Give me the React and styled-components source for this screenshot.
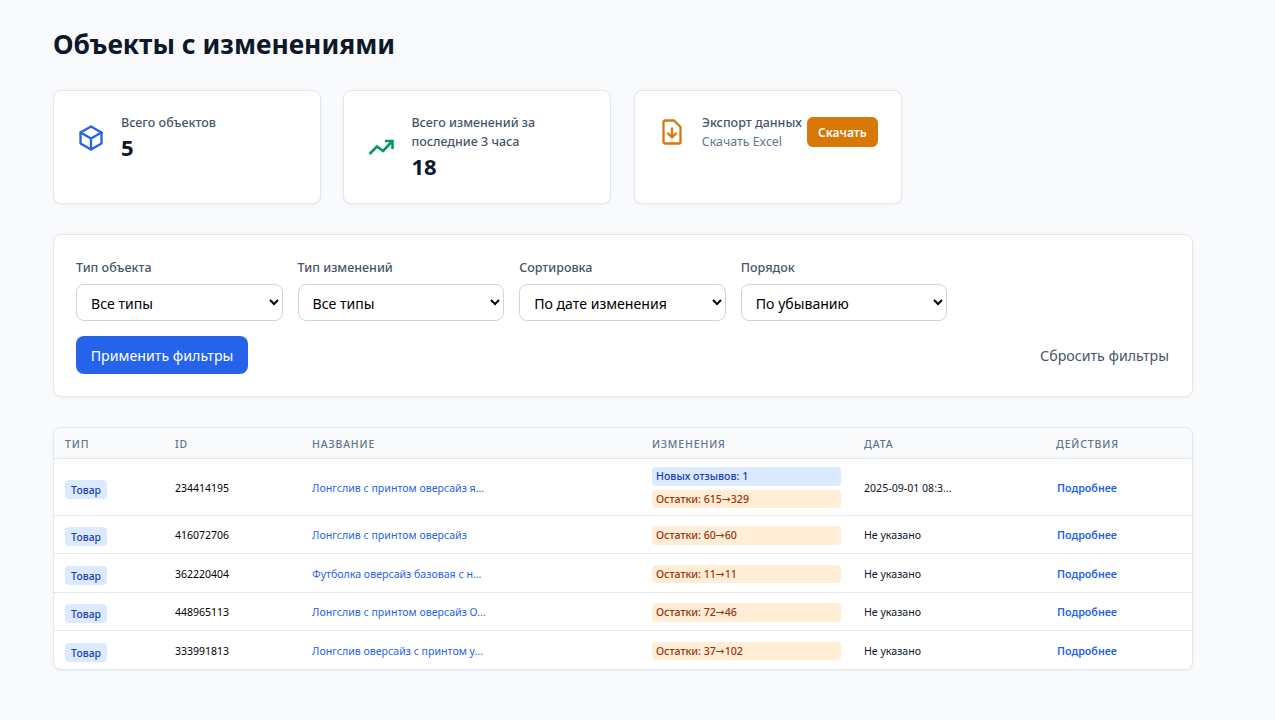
import React from "react";
import styled, { createGlobalStyle } from "styled-components";

const GlobalStyle = createGlobalStyle`
  * { box-sizing: border-box; }
  html, body { margin: 0; padding: 0; }
  body {
    background: #f8fafc;
    color: #0f172a;
    font-family: "Noto Sans", "Liberation Sans", sans-serif;
  }
`;

const Page = styled.div`
  width: 1140px;
  margin-left: 53px;
  padding: 24px 0 50px;
`;

const Title = styled.h1`
  margin: 0 0 26px;
  font-size: 26.4px;
  line-height: 40px;
  font-weight: 700;
  color: #0f172a;
`;

const Stats = styled.div`
  display: grid;
  grid-template-columns: repeat(3, 268px);
  gap: 22.4px;
  margin-bottom: 30px;
`;

const Panel = styled.div`
  background: #fff;
  border: 1px solid #e2e8f0;
  border-radius: 8px;
  box-shadow: 0 1px 3px rgba(15, 23, 42, 0.05);
`;

const StatCard = styled(Panel)`
  height: 114px;
  padding: 22px 23px 22px 22px;
  display: flex;
  align-items: flex-start;
  gap: 15px;
`;

const StatIcon = styled.div`
  width: 30px;
  height: 30px;
  flex: none;
  margin-top: ${({ $top }) => $top}px;
  color: ${({ $color }) => $color};
  display: flex;
  align-items: center;
  justify-content: center;
`;

const StatBody = styled.div`
  flex: 1;
  min-width: 0;
`;

const StatLabel = styled.div`
  font-size: 12.5px;
  line-height: 19px;
  font-weight: 500;
  color: #475569;
  white-space: ${({ $nowrap }) => ($nowrap ? "nowrap" : "normal")};
`;

const StatValue = styled.div`
  margin-top: 1px;
  font-size: 22px;
  line-height: 28px;
  font-weight: 700;
  color: #0f172a;
`;

const StatHint = styled.div`
  font-size: 12.4px;
  line-height: 19px;
  color: #64748b;
`;

const DownloadButton = styled.button`
  flex: none;
  margin: 4px 0 0 -15px;
  width: 71px;
  height: 30px;
  padding: 0;
  border: 0;
  border-radius: 6px;
  background: #d97706;
  color: #fff;
  font: 600 12px "Noto Sans", sans-serif;
`;

const FilterPanel = styled(Panel)`
  padding: 23px 23px 22px 22px;
  margin-bottom: 30px;
`;

const FilterRow = styled.div`
  display: flex;
  gap: 15.1px;
  margin-bottom: 15px;
`;

const Field = styled.label`
  width: 206.5px;
  display: flex;
  flex-direction: column;
  gap: 7px;
  font-size: 12.5px;
  line-height: 19px;
  font-weight: 500;
  color: #475569;
`;

const Select = styled.select`
  width: 100%;
  height: 37px;
  padding: 2px 10px 0;
  background: #fff;
  border: 1px solid #cbd5e1;
  border-radius: 8px;
  color: #000;
  font: 400 14.1px "Noto Sans", sans-serif;
`;

const ActionRow = styled.div`
  display: flex;
  align-items: center;
  justify-content: space-between;
`;

const ApplyButton = styled.button`
  height: 38px;
  width: 172px;
  border: 0;
  border-radius: 8px;
  background: #2563eb;
  color: #fff;
  font: 400 14.2px "Noto Sans", sans-serif;
`;

const ResetButton = styled.button`
  border: 0;
  padding: 0;
  background: none;
  color: #475569;
  font: 400 14.2px "Noto Sans", sans-serif;
`;

const TableCard = styled(Panel)`
  overflow: hidden;
`;

const Table = styled.table`
  width: 100%;
  table-layout: fixed;
  border-collapse: collapse;
  font-size: 10.6px;
`;

const HeadCell = styled.th`
  height: 30px;
  padding: 2px 11px 0;
  background: #f8fafc;
  border-bottom: 1px solid #e2e8f0;
  text-align: left;
  font-size: 10.5px;
  font-weight: 500;
  letter-spacing: 0.85px;
  text-transform: uppercase;
  color: #64748b;
`;

const Row = styled.tr`
  & + & td { border-top: 1px solid #e2e8f0; }
`;

const Cell = styled.td`
  height: 38.5px;
  padding: 9px 11px 7px;
  color: #0f172a;
  vertical-align: middle;
`;

const BadgeCell = styled(Cell)`
  padding: 8.5px 12px 6.5px 11px;
`;

const TypeTag = styled.span`
  display: inline-block;
  vertical-align: -6px;
  padding: 0 6px;
  height: 19px;
  line-height: 20px;
  border-radius: 4px;
  background: #dbeafe;
  color: #1e40af;
  font-size: 10.4px;
  font-weight: 500;
`;

const IdText = styled.span`
  font-size: 10.5px;
  color: #000;
`;

const NameLink = styled.a`
  color: #2563eb;
`;

const Changes = styled.div`
  display: flex;
  flex-direction: column;
  gap: 4px;
`;

const Change = styled.div`
  height: 18.5px;
  line-height: 18.5px;
  padding: 0 4px;
  border-radius: 4px;
  font-family: "Noto Sans", "DejaVu Sans", sans-serif;
  font-weight: 500;
  background: ${({ $kind }) => ($kind === "info" ? "#dbeafe" : "#ffedd5")};
  color: ${({ $kind }) => ($kind === "info" ? "#1e40af" : "#9a3412")};
`;

const DetailLink = styled.a`
  padding-left: 1px;
  color: #2563eb;
  font-size: 10.7px;
  font-weight: 600;
`;

const widths = [110, 137, 340, 212, 192, 147];
const heads = ["Тип", "ID", "Название", "Изменения", "Дата", "Действия"];
const rows = [
  {
    id: "234414195",
    name: "Лонгслив с принтом оверсайз я...",
    changes: [
      ["info", "Новых отзывов: 1"],
      ["stock", "Остатки: 615→329"],
    ],
    date: "2025-09-01 08:3...",
  },
  { id: "416072706", name: "Лонгслив с принтом оверсайз", changes: [["stock", "Остатки: 60→60"]], date: "Не указано" },
  { id: "362220404", name: "Футболка оверсайз базовая с н...", changes: [["stock", "Остатки: 11→11"]], date: "Не указано" },
  { id: "448965113", name: "Лонгслив с принтом оверсайз О...", changes: [["stock", "Остатки: 72→46"]], date: "Не указано" },
  { id: "333991813", name: "Лонгслив оверсайз с принтом у...", changes: [["stock", "Остатки: 37→102"]], date: "Не указано" },
];

const filters = [
  ["Тип объекта", "Все типы"],
  ["Тип изменений", "Все типы"],
  ["Сортировка", "По дате изменения"],
  ["Порядок", "По убыванию"],
];

const CubeIcon = () => (
  <svg width="24" height="26" viewBox="0 0 24 26" fill="none" stroke="currentColor" strokeWidth="2.3" strokeLinejoin="round" strokeLinecap="round">
    <path d="M12 1.5l10.5 6v11l-10.5 6-10.5-6v-11z" />
    <path d="M1.5 7.5L12 13.5l10.5-6M12 13.5v11" />
  </svg>
);

const TrendIcon = () => (
  <svg width="26" height="18" viewBox="0 0 26 18" fill="none" stroke="currentColor" strokeWidth="2.6" strokeLinejoin="miter">
    <path d="M1.5 16l7.5-7.5 6 4.5 9-9.5" />
    <path d="M17 3h7.5v8" />
  </svg>
);

const ExportIcon = () => (
  <svg width="20" height="26" viewBox="0 0 20 26" fill="none" stroke="currentColor" strokeWidth="2.3" strokeLinecap="round" strokeLinejoin="round">
    <path d="M3 1.5h9l6.5 6.5v15a1.5 1.5 0 0 1-1.5 1.5H3A1.5 1.5 0 0 1 1.5 23V3A1.5 1.5 0 0 1 3 1.5z" />
    <path d="M10 9.5v8.5M6 14.5l4 4 4-4" />
  </svg>
);

export default function App() {
  return (
    <Page>
      <GlobalStyle />
      <Title>Объекты с изменениями</Title>

      <Stats>
        <StatCard>
          <StatIcon $color="#2563eb" $top={10}><CubeIcon /></StatIcon>
          <StatBody>
            <StatLabel>Всего объектов</StatLabel>
            <StatValue>5</StatValue>
          </StatBody>
        </StatCard>
        <StatCard>
          <StatIcon $color="#059669" $top={19}><TrendIcon /></StatIcon>
          <StatBody>
            <StatLabel>Всего изменений за последние 3 часа</StatLabel>
            <StatValue>18</StatValue>
          </StatBody>
        </StatCard>
        <StatCard>
          <StatIcon $color="#d97706" $top={4}><ExportIcon /></StatIcon>
          <StatBody>
            <StatLabel $nowrap>Экспорт данных</StatLabel>
            <StatHint>Скачать Excel</StatHint>
          </StatBody>
          <DownloadButton>Скачать</DownloadButton>
        </StatCard>
      </Stats>

      <FilterPanel>
        <FilterRow>
          {filters.map(([label, value]) => (
            <Field key={label}>
              {label}
              <Select defaultValue={value}>
                <option>{value}</option>
              </Select>
            </Field>
          ))}
        </FilterRow>
        <ActionRow>
          <ApplyButton>Применить фильтры</ApplyButton>
          <ResetButton>Сбросить фильтры</ResetButton>
        </ActionRow>
      </FilterPanel>

      <TableCard>
        <Table>
          <colgroup>
            {widths.map((w, i) => <col key={i} width={w} />)}
          </colgroup>
          <thead>
            <tr>{heads.map((h) => <HeadCell key={h}>{h}</HeadCell>)}</tr>
          </thead>
          <tbody>
            {rows.map((row) => (
              <Row key={row.id}>
                <BadgeCell><TypeTag>Товар</TypeTag></BadgeCell>
                <Cell><IdText>{row.id}</IdText></Cell>
                <Cell><NameLink>{row.name}</NameLink></Cell>
                <BadgeCell>
                  <Changes>
                    {row.changes.map(([kind, text]) => <Change key={text} $kind={kind}>{text}</Change>)}
                  </Changes>
                </BadgeCell>
                <Cell>{row.date}</Cell>
                <Cell><DetailLink>Подробнее</DetailLink></Cell>
              </Row>
            ))}
          </tbody>
        </Table>
      </TableCard>
    </Page>
  );
}
